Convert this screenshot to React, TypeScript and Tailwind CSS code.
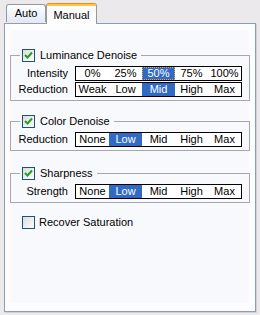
import { useState } from "react";

const Check = ({ checked }: { checked: boolean }) => (
  <span className="flex h-[13px] w-[13px] items-center justify-center border border-[#1C5180] bg-gradient-to-br from-[#DCDCD7] to-[#FFFFFF]">
    {checked && (
      <svg width="9" height="9" viewBox="0 0 9 9">
        <path d="M1 4 L3.5 6.5 L8 1.5" fill="none" stroke="#21A121" strokeWidth="2" />
      </svg>
    )}
  </span>
);

const Segments = ({ items, active, focus }: { items: string[]; active: number; focus?: boolean }) => (
  <div className="flex h-[15px] w-[167px] border border-black bg-white">
    {items.map((it, i) => (
      <div
        key={it}
        className={
          "flex flex-1 items-center justify-center leading-none " +
          (i === active ? "bg-[#316AC5] text-white " : "") +
          (i === active && focus ? "outline outline-1 outline-dotted outline-[#E8A33C] -outline-offset-1" : "")
        }
      >
        {it}
      </div>
    ))}
  </div>
);

const Row = ({ label, children }: { label: string; children: React.ReactNode }) => (
  <div className="flex h-[15px] items-center">
    <span className="w-[57px] text-right leading-none">{label}</span>
    <span className="ml-[7px]">{children}</span>
  </div>
);

const Group = ({ title, children }: { title: string; children: React.ReactNode }) => (
  <fieldset className="border border-[#A7A6AA] pb-[3px]">
    <legend className="ml-[9px] flex h-[13px] items-center gap-[5px] pl-[2px] pr-[4px] leading-none">
      <Check checked />
      <span>{title}</span>
    </legend>
    <div className="mt-[4px] flex flex-col gap-[1px]">{children}</div>
  </fieldset>
);

export default function App() {
  const [tab] = useState("Manual");

  return (
    <div
      className="h-[315px] w-[260px] bg-[#ECE9EC] pl-[4px] pt-[3px] text-[11px] text-black"
      style={{ fontFamily: '"Liberation Sans", Arial, sans-serif' }}
    >
      {/* tabs */}
      <div className="relative z-10 flex items-end pl-[2px]">
        <div className="mb-[1px] flex h-[18px] w-[40px] items-center justify-center rounded-t-[3px] border border-b-0 border-[#919B9C] bg-gradient-to-b from-[#FFFFFF] to-[#E3E8F4]">
          Auto
        </div>
        <div className="-mb-[1px] flex h-[21px] w-[51px] flex-col rounded-t-[3px] border-x border-[#919B9C] bg-[#FCFCFE]">
          <div className="h-[3px] rounded-t-[2px] border-t border-[#E68B2C] bg-[#FFC73C]" />
          <div className="flex flex-1 items-center justify-center">{tab}</div>
        </div>
      </div>

      {/* panel */}
      <div className="h-[289px] w-[252px] border border-[#8C9DB5] bg-[#FDFDFE] px-[6px] pb-[8px] pt-[6px] shadow-[1px_1px_0_#D4D0D8]">
        <div className="h-full bg-[#F8F9FD] pt-[19px]">
          <div className="-mx-[1px] flex flex-col">
            <Group title="Luminance Denoise">
              <Row label="Intensity">
                <Segments items={["0%", "25%", "50%", "75%", "100%"]} active={2} focus />
              </Row>
              <Row label="Reduction">
                <Segments items={["Weak", "Low", "Mid", "High", "Max"]} active={2} />
              </Row>
            </Group>
            <div className="h-[14px]" />
            <Group title="Color Denoise">
              <Row label="Reduction">
                <Segments items={["None", "Low", "Mid", "High", "Max"]} active={1} />
              </Row>
            </Group>
            <div className="h-[16px]" />
            <Group title="Sharpness">
              <Row label="Strength">
                <Segments items={["None", "Low", "Mid", "High", "Max"]} active={1} />
              </Row>
            </Group>
            <label className="ml-[12px] mt-[13px] flex h-[13px] items-center gap-[4px] leading-none">
              <Check checked={false} />
              <span>Recover Saturation</span>
            </label>
          </div>
        </div>
      </div>
    </div>
  );
}
